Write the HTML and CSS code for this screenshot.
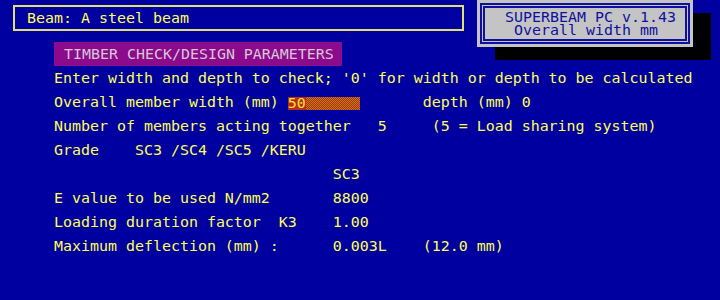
FILE: index.html
```html
<!DOCTYPE html>
<html lang="en">
<head>
  <meta charset="UTF-8">
  <meta name="viewport" content="width=device-width, initial-scale=1.0">
  <title>SUPERBEAM PC - Timber check</title>
  <link rel="stylesheet" href="styles.css">
</head>
<body>
  <div class="title-bar">Beam: A steel beam</div>

  <!-- fenetre d'info en haut a droite -->
  <div class="info-box">
    <div class="info-inner">SUPERBEAM PC v.1.43
 Overall width mm</div>
  </div>

  <section class="params">
    <h1 class="params-head">TIMBER CHECK/DESIGN PARAMETERS</h1>
    <div class="row">Enter width and depth to check; '0' for width or depth to be calculated</div>
    <div class="row">Overall member width (mm) <span class="field"><span class="field-value">50</span></span>       depth (mm) 0</div>
    <div class="row">Number of members acting together   5     (5 = Load sharing system)</div>
    <div class="row">Grade    SC3 /SC4 /SC5 /KERU</div>
    <div class="row">                               SC3</div>
    <div class="row">E value to be used N/mm2       8800</div>
    <div class="row">Loading duration factor  K3    1.00</div>
    <div class="row">Maximum deflection (mm) :      0.003L    (12.0 mm)</div>
  </section>
</body>
</html>
```

FILE: styles.css
```css
body {
  margin: 0;
  background-color: #0000a0;
  color: #ffff55;
  font-family: "DejaVu Sans Mono", "Liberation Mono", monospace;
  font-size: 14.95px;
  height: 300px;
  overflow: hidden;
}

.title-bar {
  box-sizing: border-box;
  width: 451px;
  height: 26px;
  margin: 5px 0 0 13px;
  padding-left: 12px;
  border: 2px solid #e0e070;
  line-height: 22px;
  white-space: pre;
}

.info-box {
  position: absolute;
  top: 0;
  left: 477px;
  width: 216px;
  height: 47px;
  box-sizing: border-box;
  padding: 3px;
  background-color: #c4c4c4;
  box-shadow: 18px 13px 0 #000;
}

.info-inner {
  box-sizing: border-box;
  height: 100%;
  border: 5px double #1010a0;
  padding: 3px 0 0 20px;
  color: #1010a0;
  line-height: 13px;
  white-space: pre;
}

.params {
  margin-top: 11px;
  padding-left: 54px;
}

.params-head {
  box-sizing: border-box;
  width: 288px;
  height: 24px;
  margin: 0;
  padding-left: 10px;
  background-color: #8c0a8c;
  color: #d4c8d4;
  font-size: inherit;
  font-weight: normal;
  line-height: 24px;
}

.row {
  height: 24px;
  line-height: 24px;
  white-space: pre;
}

.field {
  display: inline-block;
  width: 72px;
  height: 13px;
  line-height: 13px;
  vertical-align: -1px;
  background-color: #b84a10;
  background-image: repeating-conic-gradient(#d0701c 0 25%, #a03808 0 50%);
  background-size: 2px 2px;
}

.field-value {
  display: inline-block;
  background-color: #b82c10;
  color: #ffe040;
}
```
